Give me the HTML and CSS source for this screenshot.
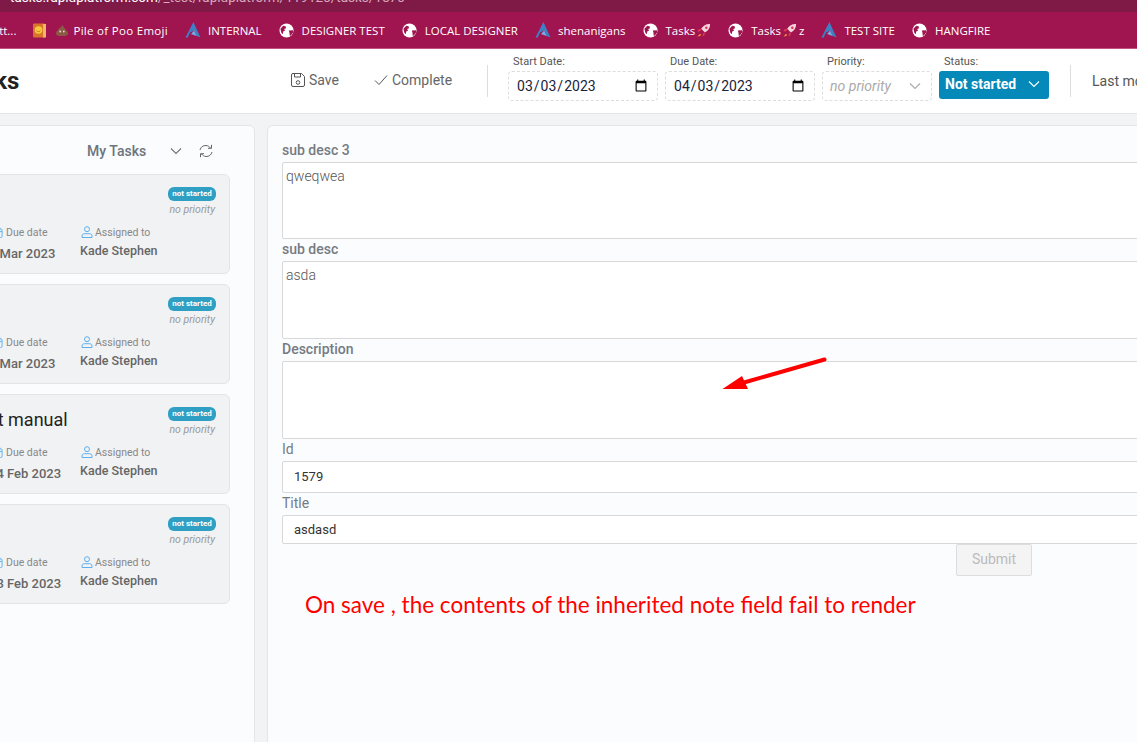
FILE: index.html
```html
<!DOCTYPE html>
<html lang="en">
<head>
    <meta charset="UTF-8">
    <title>Tasks</title>
    <link rel="stylesheet" href="styles.css">
</head>

<body>
    <svg class="defs" width="0" height="0">
        <symbol id="globe" viewBox="0 0 16 16">
            <circle cx="8" cy="8" r="7.500" fill="#fff"/>
            <path d="M1.500 6 4.500 3 7 3.500 7.500 5.500 5.500 6.500 6.500 8 4.500 9 4 12 2.500 10.500z" fill="#a0144f"/>
            <path d="M10.500 8l4.300-.4.400 2.200-2.500 3.600-1.300.2-.2-3z" fill="#a0144f"/>
        </symbol>
        <symbol id="logo" viewBox="0 0 16 16">
            <path d="M8.400 0 15.500 15.500 11.500 14 9.200 8.600 5 10.400 2.600 15.800.4 15.500z" fill="#3f7fc4"/>
            <path d="M9.200 8.600 11.500 14 6 12z" fill="#76abe3"/>
        </symbol>
        <symbol id="rocket" viewBox="0 0 16 16">
            <path d="M15 1c-4-.3-7 1.500-9.500 5.200l4 4C13 8 15.300 5 15 1z" fill="#f4d4dc"/>
            <path d="M5.500 6.200 2.500 7l-1 2 3-.3zM9.500 10.200 9 13l-2 1.500.2-3z" fill="#e63950"/>
            <path d="M4.500 11.500 1.500 14.500l3-.7.800-1.500z" fill="#f59a3c"/>
            <circle cx="11" cy="5" r="1.300" fill="#d9324e"/>
        </symbol>
        <symbol id="user" viewBox="0 0 12 12">
            <circle cx="6" cy="3.200" r="2.500" fill="none" stroke="#5cb0f0"/>
            <path d="M1 11.500V10c0-1.400 1-2.300 2.400-2.300h5.200C10 7.700 11 8.600 11 10v1.500z" fill="none" stroke="#5cb0f0"/>
        </symbol>
        <symbol id="cal" viewBox="0 0 12 12">
            <rect x="1" y="2" width="10" height="9.500" rx="1.500" fill="none" stroke="#5cb0f0"/>
            <path d="M1 5h10M3.500.5v3M8.500.5v3M4 7.500h4M4 9.500h4" stroke="#5cb0f0" fill="none"/>
        </symbol>
        <symbol id="chev" viewBox="0 0 12 12">
            <path d="M1 3.500 6 8.500l5-5" fill="none" stroke="currentColor" stroke-width="1.100"/>
        </symbol>
    </svg>

    <div class="url-bar"><span class="url-host">tasks.rapidplatform.com</span>/_test/rapidplatform/119126/tasks/1576</div>

    <div class="bookmarks">
        <span class="bm bm-first">Twitt...</span>
        <span class="bm bm-book">
            <svg class="ico" width="13" height="15" viewBox="0 0 13 15"><rect x="0" y="0.500" width="12" height="14" rx="1" fill="#d9752a"/><rect x="10" y="1" width="3" height="13.500" fill="#f2b36b"/><circle cx="5.500" cy="7" r="3.800" fill="#f6c83c"/><path d="M3.500 7.500c.8 1.500 3.200 1.500 4 0" fill="none" stroke="#b5651d" stroke-width=".8"/></svg>
        </span>
        <span class="bm bm-poo">
            <svg class="ico" width="12" height="11" viewBox="0 0 12 11"><path d="M6 0c1 1 2 1.500 2 3 1.500 0 2 1.200 1.800 2.300C11 5.600 12 6.800 12 8.200 12 10 10.500 11 8.500 11h-5C1.500 11 0 10 0 8.200c0-1.400 1-2.600 2.200-2.900C2 4.200 2.800 3 4 3c.3-1 1.700-1.500 2-3z" fill="#8a5a44"/><circle cx="4.200" cy="6.500" r=".9" fill="#e8ddd5"/><circle cx="7.800" cy="6.500" r=".9" fill="#e8ddd5"/></svg>
            Pile of Poo Emoji
        </span>
        <span class="bm bm-logo"><svg class="ico" width="16" height="16"><use href="#logo"/></svg>INTERNAL</span>
        <span class="bm"><svg class="ico" width="15" height="15"><use href="#globe"/></svg>DESIGNER TEST</span>
        <span class="bm"><svg class="ico" width="15" height="15"><use href="#globe"/></svg>LOCAL DESIGNER</span>
        <span class="bm bm-logo"><svg class="ico" width="16" height="16"><use href="#logo"/></svg>shenanigans</span>
        <span class="bm"><svg class="ico" width="15" height="15"><use href="#globe"/></svg>Tasks<svg class="rocket" width="15" height="15"><use href="#rocket"/></svg></span>
        <span class="bm"><svg class="ico" width="15" height="15"><use href="#globe"/></svg>Tasks<svg class="rocket rocket-z" width="15" height="15"><use href="#rocket"/></svg>z</span>
        <span class="bm bm-logo"><svg class="ico" width="16" height="16"><use href="#logo"/></svg>TEST SITE</span>
        <span class="bm"><svg class="ico" width="15" height="15"><use href="#globe"/></svg>HANGFIRE</span>
    </div>

    <header class="top">
        <h1 class="page-title">Tasks</h1>
        <button class="action action-save">
            <svg width="14" height="14" viewBox="0 0 14 14" fill="none" stroke="#555"><path d="M1.500.5h9l3 3v8.500a1.500 1.500 0 0 1-1.500 1.500H2A1.500 1.500 0 0 1 .5 12V2A1.500 1.500 0 0 1 2 .5z"/><path d="M3.500.5v3.500h6V.5"/><circle cx="7" cy="9.500" r="1.800"/></svg>
            Save
        </button>
        <button class="action action-complete">
            <svg width="14" height="12" viewBox="0 0 14 12" fill="none" stroke="#555"><path d="M1 6.500 5 10.500 13 1.500"/></svg>
            Complete
        </button>
        <div class="divider divider-a"></div>
        <div class="hfield field-start">
            <label>Start Date:</label>
            <input class="date-input" type="date" value="2023-03-03">
        </div>
        <div class="hfield field-due">
            <label>Due Date:</label>
            <input class="date-input" type="date" value="2023-04-03">
        </div>
        <div class="hfield field-priority">
            <label>Priority:</label>
            <div class="priority-select">no priority <svg width="12" height="12"><use href="#chev"/></svg></div>
        </div>
        <div class="hfield field-status">
            <label>Status:</label>
            <div class="status-select">Not started <svg width="12" height="12"><use href="#chev"/></svg></div>
        </div>
        <div class="divider divider-b"></div>
        <span class="last-mod">Last modified</span>
    </header>

    <main class="main">
        <aside class="side">
            <div class="side-head">
                <span class="side-title">My Tasks</span>
                <svg class="side-chev" width="12" height="12"><use href="#chev"/></svg>
                <svg class="side-refresh" width="14" height="14" viewBox="0 0 14 14" fill="none" stroke="#666"><path d="M1 6C1.500 3.300 4 1.300 7 1.500c1.800.1 3.300 1 4.500 2.500M13 8c-.5 2.700-3 4.700-6 4.500-1.800-.1-3.300-1-4.500-2.500"/><path d="M12.500 .8V4.300H9M1.500 13.200V9.700H5"/></svg>
            </div>

            <div class="card">
                <div class="card-main">
                    <div class="card-title">&nbsp;</div>
                    <div class="card-meta">
                        <div class="meta-due"><div class="meta-label"><svg width="11" height="11"><use href="#cal"/></svg>Due date</div><div class="meta-date">1 Mar 2023</div></div>
                        <div class="meta-who"><div class="meta-label"><svg width="12" height="12"><use href="#user"/></svg>Assigned to</div><div class="meta-name">Kade Stephen</div></div>
                    </div>
                </div>
                <div class="card-status"><span class="badge">not started</span><span class="no-prio">no priority</span></div>
            </div>

            <div class="card">
                <div class="card-main">
                    <div class="card-title">&nbsp;</div>
                    <div class="card-meta">
                        <div class="meta-due"><div class="meta-label"><svg width="11" height="11"><use href="#cal"/></svg>Due date</div><div class="meta-date">1 Mar 2023</div></div>
                        <div class="meta-who"><div class="meta-label"><svg width="12" height="12"><use href="#user"/></svg>Assigned to</div><div class="meta-name">Kade Stephen</div></div>
                    </div>
                </div>
                <div class="card-status"><span class="badge">not started</span><span class="no-prio">no priority</span></div>
            </div>

            <div class="card">
                <div class="card-main">
                    <div class="card-title">Test manual</div>
                    <div class="card-meta">
                        <div class="meta-due"><div class="meta-label"><svg width="11" height="11"><use href="#cal"/></svg>Due date</div><div class="meta-date">14 Feb 2023</div></div>
                        <div class="meta-who"><div class="meta-label"><svg width="12" height="12"><use href="#user"/></svg>Assigned to</div><div class="meta-name">Kade Stephen</div></div>
                    </div>
                </div>
                <div class="card-status"><span class="badge">not started</span><span class="no-prio">no priority</span></div>
            </div>

            <div class="card">
                <div class="card-main">
                    <div class="card-title">&nbsp;</div>
                    <div class="card-meta">
                        <div class="meta-due"><div class="meta-label"><svg width="11" height="11"><use href="#cal"/></svg>Due date</div><div class="meta-date">13 Feb 2023</div></div>
                        <div class="meta-who"><div class="meta-label"><svg width="12" height="12"><use href="#user"/></svg>Assigned to</div><div class="meta-name">Kade Stephen</div></div>
                    </div>
                </div>
                <div class="card-status"><span class="badge">not started</span><span class="no-prio">no priority</span></div>
            </div>
        </aside>

        <section class="form-panel">
            <label class="flabel">sub desc 3</label>
            <textarea class="area area-short">qweqwea</textarea>
            <label class="flabel">sub desc</label>
            <textarea class="area">asda</textarea>
            <label class="flabel">Description</label>
            <textarea class="area"></textarea>
            <label class="flabel flabel-light">Id</label>
            <input class="text-input input-id" type="text" value="1579">
            <label class="flabel flabel-light">Title</label>
            <input class="text-input input-title" type="text" value="asdasd">
            <div class="form-actions"><button class="submit" disabled>Submit</button></div>

            <svg class="arrow" width="106" height="34" viewBox="0 0 106 34"><path d="M102.500 2.500 22 25.500" stroke="#ff0000" stroke-width="4" stroke-linecap="round"/><path d="M.5 32 20 19 26 32z" fill="#ff0000"/></svg>
            <div class="note">On save , the contents of the inherited note field fail to render</div>
        </section>
    </main>
</body>
</html>
```

FILE: styles.css
```css
* {
    box-sizing: border-box;
}

html, body {
    height: 100%;
}

body {
    margin: 0;
    width: 1137px;
    height: 742px;
    overflow: hidden;
    display: flex;
    flex-direction: column;
    font-family: Roboto, Arial, sans-serif;
    background-color: #f2f3f5;
    color: #333;
}

.defs {
    position: absolute;
}

/* browser chrome */
.url-bar {
    height: 12px;
    flex: none;
    padding-left: 10px;
    background-color: #7f1a47;
    color: #d9a9bf;
    font-size: 13.500px;
    line-height: 12px;
    overflow: hidden;
    white-space: nowrap;
}

.url-bar::before {
    content: "";
    display: block;
    margin-top: -9px;
}

.url-host {
    color: #fff;
}

.bookmarks {
    height: 37px;
    flex: none;
    display: flex;
    align-items: center;
    gap: 17px;
    background-color: #a0144f;
    border-bottom: 1px solid #c4517f;
    color: #fff;
    font-family: "Open Sans", sans-serif;
    font-size: 11.500px;
    white-space: nowrap;
    overflow: hidden;
}

.bm {
    display: flex;
    align-items: center;
    flex: none;
}

.bm-first {
    margin-left: -19px;
}

.bm-book {
    margin-right: -15px;
}

.ico {
    margin-right: 8px;
    flex: none;
}

.bm-logo .ico {
    margin-right: 7px;
}

.rocket {
    margin-left: 1px;
    flex: none;
}

.rocket-z {
    margin-right: 2px;
}

.bm-poo {
    letter-spacing: 0.3px;
}

.bm-poo .ico {
    margin-right: 5px;
}

/* page header */
.top {
    height: 65px;
    flex: none;
    display: flex;
    align-items: center;
    background-color: #fff;
    border-bottom: 1px solid #e4e5e7;
    white-space: nowrap;
}

.page-title {
    margin: 0 0 0 -44px;
    width: 62px;
    font-size: 24px;
    font-weight: 700;
    color: #222;
    flex: none;
}

.action {
    display: flex;
    align-items: center;
    gap: 4px;
    border: none;
    padding: 0 0 3px;
    background: none;
    font-family: Roboto, Arial, sans-serif;
    font-size: 14px;
    color: #666;
    flex: none;
}

.action-save {
    margin-left: 273px;
    width: 83px;
}

.divider {
    width: 1px;
    height: 32px;
    background-color: #ddd;
    flex: none;
}

.divider-a {
    margin-left: 35px;
}

.hfield {
    align-self: flex-start;
    flex: none;
    margin-top: 6px;
    margin-left: 7px;
}

.hfield label {
    display: block;
    height: 16px;
    padding-left: 5px;
    font-size: 11px;
    line-height: 13px;
    color: #555;
}

.field-start {
    margin-left: 20px;
}

.date-input {
    display: block;
    width: 150px;
    height: 30px;
    padding: 0 7px;
    border: 1px dashed #ddd;
    border-radius: 4px;
    background: #fff;
    font-family: Roboto, Arial, sans-serif;
    font-size: 14px;
    color: #17233c;
}

.priority-select {
    display: flex;
    align-items: center;
    justify-content: space-between;
    width: 110px;
    height: 30px;
    padding: 0 10px 0 7px;
    border: 1px dashed #ddd;
    border-radius: 4px;
    font-size: 14px;
    font-style: italic;
    color: #aaa;
}

.priority-select svg {
    color: #aaa;
}

.status-select {
    display: flex;
    align-items: center;
    justify-content: space-between;
    width: 110px;
    height: 28px;
    padding: 0 9px 2px 6px;
    border-radius: 3px;
    background-color: #0589b8;
    color: #fff;
    font-size: 14px;
    font-weight: 700;
}

.divider-b {
    margin-left: 21px;
}

.last-mod {
    margin-left: 21px;
    font-size: 14px;
    color: #555;
}

/* main area */
.main {
    flex: none;
    height: 640px;
    display: flex;
    gap: 12px;
    padding-top: 11px;
}

.side {
    flex: none;
    width: 285px;
    margin-left: -30px;
    padding: 0 24px 0 6px;
    background-color: #fbfcfe;
    border: 1px solid #e4e5e7;
    border-radius: 6px;
}

.side-head {
    height: 48px;
    display: flex;
    align-items: center;
    padding: 2px 0 0 110px;
    color: #6c757d;
}

.side-title {
    width: 83px;
    font-size: 14px;
    font-weight: 500;
}

.side-refresh {
    margin-left: 17px;
}

.card {
    height: 100px;
    margin-bottom: 10px;
    display: flex;
    justify-content: space-between;
    padding: 12px 13px 0 11px;
    background-color: #f1f2f4;
    border: 1px solid #e3e4e6;
    border-radius: 6px;
}

.card-title {
    height: 33px;
    margin-left: -20px;
    font-size: 18px;
    line-height: 25px;
    color: #222;
    white-space: nowrap;
}

.card-meta {
    display: flex;
    margin-top: 5px;
}

.meta-due {
    width: 91px;
    flex: none;
}

.meta-label {
    display: flex;
    align-items: center;
    gap: 3px;
    height: 14px;
    font-size: 10.500px;
    color: #888;
    white-space: nowrap;
}

.meta-due .meta-label {
    margin-left: 3px;
}

.meta-who .meta-label {
    margin-left: 1px;
    gap: 2px;
}

.meta-date {
    margin-top: 7px;
    font-size: 13px;
    font-weight: 500;
    color: #666;
    white-space: nowrap;
}

.meta-name {
    margin-top: 4px;
    font-size: 12.500px;
    font-weight: 500;
    color: #666;
    white-space: nowrap;
}

.card-status {
    display: flex;
    flex-direction: column;
    align-items: flex-end;
    flex: none;
}

.badge {
    width: 48px;
    height: 14px;
    border-radius: 6px;
    background-color: #2f9fc4;
    color: #fff;
    font-size: 8px;
    font-weight: 700;
    line-height: 14px;
    text-align: center;
}

.no-prio {
    margin-top: 2px;
    margin-right: 1px;
    font-size: 10.500px;
    font-style: italic;
    color: #999;
}

/* form */
.form-panel {
    position: relative;
    flex: none;
    width: 900px;
    padding: 14px 0 0 14px;
    background-color: #fbfcfe;
    border: 1px solid #e4e5e7;
    border-radius: 6px;
}

.flabel {
    display: block;
    height: 22px;
    font-size: 14px;
    font-weight: 500;
    line-height: 20px;
    color: #757b82;
}

.flabel-light {
    font-weight: 400;
}

.area {
    display: block;
    width: 100%;
    height: 78px;
    padding: 5px 3px;
    border: 1px solid #d8d8d8;
    border-radius: 2px;
    background: #fff;
    font-family: Roboto, Arial, sans-serif;
    font-size: 14px;
    font-weight: 300;
    color: #555;
    resize: none;
}

.area-short {
    height: 77px;
}

.text-input {
    display: block;
    width: 100%;
    padding: 0 11px;
    border: 1px solid #d8d8d8;
    border-radius: 2px;
    background: #fff;
    font-family: Roboto, Arial, sans-serif;
    font-size: 13px;
    color: #333;
}

.input-id {
    height: 32px;
    padding-bottom: 2px;
}

.input-title {
    height: 29px;
}

.form-actions {
    padding-left: 674px;
}

.submit {
    width: 76px;
    height: 32px;
    padding: 0 0 2px;
    border: 1px solid #ddd;
    border-radius: 2px;
    background-color: #f4f4f4;
    font-family: Roboto, Arial, sans-serif;
    font-size: 14px;
    color: #bbb;
}

/* markup drawn over the screenshot */
.arrow {
    position: absolute;
    left: 454px;
    top: 231px;
}

.note {
    position: absolute;
    left: 37px;
    top: 465px;
    font-family: Lato, sans-serif;
    font-size: 22.500px;
    color: #ff0000;
    white-space: nowrap;
}
```
